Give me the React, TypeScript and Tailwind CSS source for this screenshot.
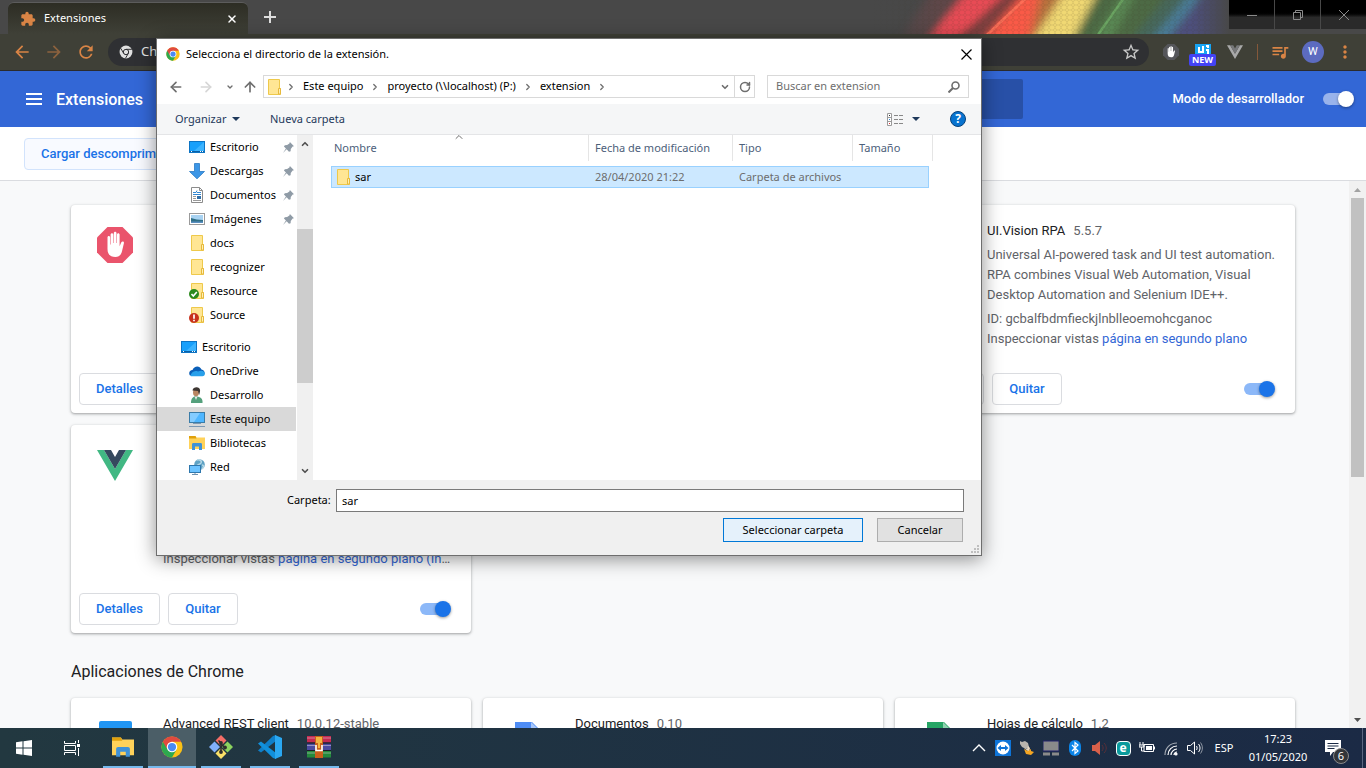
import React, { useState } from 'react';
import {
  MdArrowBack,
  MdArrowForward,
  MdExtension,
  MdMoreVert,
  MdQueueMusic,
  MdRefresh,
  MdStarBorder,
} from 'react-icons/md';
import { ArrowLeft, ArrowRight, ArrowUp, ChevronDown, ChevronRight, ChevronUp, RotateCw, X } from 'lucide-react';

/* ---------- icons ---------- */

const ChromeLogo = ({ className }: { className?: string }) => (
  <svg viewBox="0 0 48 48" className={className}>
    <circle cx="24" cy="24" r="23" fill="#fbc116" />
    <path d="M24 24 L4.1 12.5 A23 23 0 0 0 24 47 L34 29.7 Z" fill="#2da94f" />
    <path d="M4.1 12.5 A23 23 0 0 1 44 12.5 L24 12.5 L14 29.7 Z" fill="#e04a3f" />
    <circle cx="24" cy="24" r="11.5" fill="#fff" />
    <circle cx="24" cy="24" r="9" fill="#4a8af4" />
  </svg>
);

const ChromeMono = () => (
  <svg viewBox="0 0 24 24" className="size-3.5 shrink-0">
    <circle cx="12" cy="12" r="11" fill="#e0e0e0" />
    <g fill="none" stroke="#303033" strokeWidth="1.7">
      <circle cx="12" cy="12" r="4.6" />
      <path d="M12 7.4h10M8 14.3 3 5.7M16 14.3 11 23" />
    </g>
  </svg>
);

const HandIcon = ({ bg, className }: { bg: string; className?: string }) => (
  <svg viewBox="0 0 36 36" className={className}>
    <path d="M10.5 0h15L36 10.5v15L25.5 36h-15L0 25.5v-15z" fill={bg} />
    <path
      d="M10.5 10.5c0-2 2.6-2 2.6 0v7h.5V7.7c0-2 2.7-2 2.7 0V16h.5V6.2c0-2 2.7-2 2.7 0V16h.5V7.7c0-2 2.6-2 2.6 0v11.5l1.6-3.6c.8-1.9 3.2-1.3 2.7.7l-1.9 8c-.9 4-3.2 5.7-6.6 5.7-5 0-7.9-2.5-7.9-8z"
      fill="#fff"
    />
  </svg>
);

const VueIcon = ({ outer, inner, className }: { outer: string; inner: string; className?: string }) => (
  <svg viewBox="0 0 36 36" className={className}>
    <path d="M0 3h7l11 19L29 3h7L18 34z" fill={outer} />
    <path d="M7 3h7l4 7 4-7h7L18 22z" fill={inner} />
  </svg>
);

const FolderIcon = ({ badge }: { badge?: 'ok' | 'error' }) => (
  <svg viewBox="0 0 16 16" className="size-4 shrink-0">
    <path d="M2.5.5h11v9h1v6h-12z" fill="#ffe694" stroke="#eec94b" />
    <path d="M12.5 15V9.5h2V15z" fill="#fff0b5" stroke="#e6b93c" />
    {badge === 'ok' && (
      <>
        <circle cx="5" cy="11" r="5" fill="#2b8a1c" />
        <path d="M2.5 11l1.8 2 3.5-4" fill="none" stroke="#fff" strokeWidth="1.6" />
      </>
    )}
    {badge === 'error' && (
      <>
        <circle cx="5" cy="11" r="5" fill="#c8321c" />
        <path d="M5 7.5v4.3M5 12.7v1.5" stroke="#fff" strokeWidth="1.7" />
      </>
    )}
  </svg>
);

const DesktopIcon = () => (
  <svg viewBox="0 0 16 16" className="size-4 shrink-0">
    <rect x=".5" y="2.5" width="15" height="11" fill="#18a0fb" stroke="#0d74c4" />
    <path d="M15 3v9H5z" fill="#3cb4ff" />
    <path d="M1 12.5h14" stroke="#0a5fa5" />
    <path d="M2 12.5h1M11 12.5h1M13 12.5h1" stroke="#fff" />
  </svg>
);

const DownloadIcon = () => (
  <svg viewBox="0 0 16 16" className="size-4 shrink-0">
    <path d="M5.5.5h5v8h5L8 15.8.5 8.5h5z" fill="#3c96e6" stroke="#2a7ac4" strokeWidth=".8" />
  </svg>
);

const DocumentIcon = () => (
  <svg viewBox="0 0 16 16" className="size-4 shrink-0">
    <path d="M2.5.5h8l3 3v12h-11z" fill="#fff" stroke="#8c8c8c" />
    <path d="M10.5.5v3h3" fill="none" stroke="#8c8c8c" />
    <path d="M4 5.5h3l1-2M8 5.5h4M4 7.5h8" stroke="#2f86d2" fill="none" />
    <path d="M4 9.5h3M4 11.5h3M4 13.5h8" stroke="#9a9a9a" />
    <path d="M8 9h4v3H8z" fill="#2f6ea8" />
  </svg>
);

const PictureIcon = () => (
  <svg viewBox="0 0 16 16" className="size-4 shrink-0">
    <rect x=".5" y="2.5" width="15" height="11" fill="#fff" stroke="#9a9a9a" />
    <path d="M2 4h12v8H2z" fill="#a9d3f2" />
    <path d="M2 7c4 1 7 2 12 2v3H2z" fill="#2f6f86" />
    <path d="M2 10.5h12V12H2z" fill="#5a8fc0" />
  </svg>
);

const OneDriveIcon = () => (
  <svg viewBox="0 0 16 16" className="size-4 shrink-0">
    <path d="M1 12.5C-.8 10 .6 7 3.5 7 5 3 10.5 2 12.5 6.5c2.5.3 3.5 2.5 3 4.5z" fill="#0a5fb8" />
    <path d="M1.5 13C2 9.5 5 7 9 8.500c5-2 7.500 1 6.800 3-.4 1-1 1.700-2.300 1.700H3c-.6 0-1 0-1.500-.2z" fill="#28a0ea" />
  </svg>
);

const UserIcon = () => (
  <svg viewBox="0 0 16 16" className="size-4 shrink-0">
    <path d="M2 16c0-3 1-6.5 5-7l3 1c2.5.6 4 3 3.5 6z" fill="#54a07c" />
    <path d="M5.5 9.500 7 13l1.500-3.500z" fill="#e8e8e8" />
    <ellipse cx="7" cy="5.5" rx="3" ry="3.8" fill="#b98662" />
    <path d="M3.5 3.5C4-.8 12-1 11 4.5L10.2 8 9 4z" fill="#3d3632" />
  </svg>
);

const ComputerIcon = () => (
  <svg viewBox="0 0 16 16" className="size-4 shrink-0">
    <rect x=".5" y="1.5" width="15" height="10" fill="#4fb6ff" stroke="#3a7ca8" />
    <path d="M1 2h10L5 11H1z" fill="#84ccff" />
    <path d="M4 12.5h8M0 15.5h16" stroke="#7c98b3" />
  </svg>
);

const LibraryIcon = ({ className }: { className?: string }) => (
  <svg viewBox="0 0 16 16" className={className}>
    <path d="M0 1h6.5l1 1.5H16V14H0z" fill="#ffd25a" />
    <path d="M0 1h6.5l1 2.5H0z" fill="#e0a10c" />
    <path d="M3 15V9.5C3 8.5 3.5 8 4.5 8h7c1 0 1.5.5 1.5 1.500V15h-3v-3.500H6V15z" fill="#3f92d8" />
  </svg>
);

const NetworkIcon = () => (
  <svg viewBox="0 0 16 16" className="size-4 shrink-0">
    <circle cx="10.5" cy="5.5" r="5.3" fill="#5fa2c4" />
    <path d="M8 1c3-1 5 1 4 3s-4 1-4 3M13 6c2 0 2 2 0 4" fill="none" stroke="#b7d8e6" strokeWidth="1.5" />
    <rect x=".5" y="6.5" width="11" height="7" fill="#6cc3ff" stroke="#2e77ad" />
    <path d="M3 15.5h6M6 14v1" stroke="#6f93b0" />
  </svg>
);

const PinIcon = () => (
  <svg viewBox="0 0 12 12" className="size-[11px] shrink-0">
    <path d="M7.5 0 12 4.5 10.5 5 8.5 7.5 8.3 10 6.5 10.5 4 8 0 12 3.2 7.2 1 5 2 3.5l2.5-.2L7 1.500z" fill="#8f9ba6" />
  </svg>
);

const HeaderPattern = () => (
  <svg viewBox="0 0 360 34" preserveAspectRatio="none" className="h-full w-full">
    <defs>
      <filter id="glow" x="-20%" y="-20%" width="140%" height="140%">
        <feGaussianBlur stdDeviation="5 2" />
      </filter>
      <pattern id="hex" width="6" height="5" patternUnits="userSpaceOnUse">
        <path d="M0 2.5 1.5 0h3L6 2.5 4.5 5h-3z" fill="none" stroke="#302c1c" strokeOpacity=".2" strokeWidth=".6" />
      </pattern>
      <linearGradient id="fade">
        <stop offset="0" stopColor="#484848" />
        <stop offset=".2" stopColor="#484848" stopOpacity="0" />
        <stop offset=".9" stopColor="#484848" stopOpacity="0" />
        <stop offset="1" stopColor="#484848" />
      </linearGradient>
    </defs>
    <path d="M0 0h360v34H0z" fill="#484848" />
    <g filter="url(#glow)">
      <path d="M30 40 60-6h60L70 40z" fill="#5e4649" />
      <path d="M58 40 96-6h42L88 40z" fill="#e84c55" />
      <path d="M86 40 136-6h24L112 40z" fill="#80413f" />
      <path d="M114 40 154-6h26L164 46z" fill="#fa5a46" />
      <path d="M160 40 172-6h24L174 40z" fill="#b5713c" />
      <path d="M164 40 194-6h34L204 40z" fill="#f0d873" />
      <path d="M204 40 228-6h70L268 40z" fill="#4e6a44" />
      <path d="M226 40 254-6h12L242 40z" fill="#5a8a55" />
      <path d="M262 40 300-6h24L284 40z" fill="#46685c" />
      <path d="M282 40 320-6h16L300 40z" fill="#4a7c96" />
      <path d="M298 40 334-6h32v46z" fill="#4d4f7c" />
    </g>
    <path d="M117 34 153 0h4L121 34z" fill="#ff7058" opacity=".9" />
    <path d="M228 34 252 0h3L231 34z" fill="#6fae67" opacity=".8" />
    <path d="M0 0h360v34H0z" fill="url(#hex)" />
    <path d="M0 0h360v34H0z" fill="url(#fade)" />
  </svg>
);

/* ---------- browser chrome ---------- */

const TabStrip = () => (
  <div className="flex h-[34px] shrink-0 bg-[#484848] font-['Noto_Sans',sans-serif] text-[11px]">
    <div className="ml-2 mt-0.5 flex w-60 items-center rounded-t-md border-t border-[#5c5c5c] bg-linear-to-b from-[#2d2d24] to-[#3f4037] pl-3 pr-2.5 text-white">
      <MdExtension className="size-4 text-[#d98445]" />
      <span className="ml-2 flex-1">Extensiones</span>
      <button aria-label="Cerrar pestaña">
        <X className="size-3" strokeWidth={3} />
      </button>
    </div>
    <button aria-label="Nueva pestaña" className="ml-3.5 text-[#dedede]">
      <svg viewBox="0 0 16 16" className="size-4">
        <path d="M8 2v12M2 8h12" stroke="currentColor" strokeWidth="2" />
      </svg>
    </button>
    <div className="flex-1" />
    <div className="h-full w-[360px]">
      <HeaderPattern />
    </div>
    <div className="flex h-[29px] gap-px text-[#8a8a8a]">
      <button aria-label="Minimizar" className="flex w-[45px] items-center justify-center bg-linear-to-b from-black from-40% to-[#2a2a2a] to-60%">
        <svg viewBox="0 0 10 10" className="size-2.5"><path d="M0 5.5h10" stroke="currentColor" /></svg>
      </button>
      <button aria-label="Restaurar" className="flex w-[45px] items-center justify-center bg-linear-to-b from-black from-40% to-[#2a2a2a] to-60%">
        <svg viewBox="0 0 10 10" className="size-2.5" fill="none" stroke="currentColor">
          <path d="M.5 2.5h7v7h-7zM2.5 2.5v-2h7v7h-2" />
        </svg>
      </button>
      <button aria-label="Cerrar" className="flex w-[45px] items-center justify-center bg-linear-to-b from-black from-40% to-[#2a2a2a] to-60%">
        <svg viewBox="0 0 10 10" className="size-2.5"><path d="M0 0l10 10M10 0 0 10" stroke="currentColor" /></svg>
      </button>
    </div>
  </div>
);

const AddressToolbar = () => (
  <div className="flex h-[37px] shrink-0 items-center gap-3 border-b border-[#2b2b2e] bg-[#3f4037] pl-3 pr-[11px] text-[#d98445]">
    <button aria-label="Atrás"><MdArrowBack className="size-5" /></button>
    <button aria-label="Adelante" className="opacity-50"><MdArrowForward className="size-5" /></button>
    <button aria-label="Recargar"><MdRefresh className="size-5" /></button>
    <div className="flex h-7 flex-1 items-center rounded-full bg-[#2f3033] pl-[11px] pr-2 text-[#e4e4e4]">
      <ChromeMono />
      <span className="ml-2 flex-1 font-['Noto_Sans',sans-serif] text-[13px]">Chrome</span>
      <MdStarBorder className="size-5 text-[#c8c8c8]" />
    </div>
    <HandIcon bg="#55565a" className="size-5 p-0.5" />
    <div className="relative size-5">
      <svg viewBox="0 0 16 16" className="mx-auto size-4">
        <path d="M0 2h16v14H0z" fill="#16a4f4" />
        <path d="M4 5v5h4V4M11 4h2v2M11 8h2v4" stroke="#fff" strokeWidth="2" fill="none" />
      </svg>
      <span className="absolute -left-1 top-3 flex h-3 w-[27px] items-center justify-center rounded-xs bg-[#4343f5] font-['Noto_Sans',sans-serif] text-[9px] font-bold text-white">
        NEW
      </span>
    </div>
    <VueIcon outer="#a9a9a9" inner="#77787a" className="size-5 p-0.5" />
    <div className="h-4 w-px bg-[#85583a]" />
    <MdQueueMusic className="size-5" />
    <span className="flex size-[22px] items-center justify-center rounded-full bg-[#5c6bc0] font-['Roboto',sans-serif] text-[11px] text-white">W</span>
    <MdMoreVert className="-ml-px size-5" />
  </div>
);

/* ---------- extensions page ---------- */

const Toggle = ({ label, light }: { label: string; light?: boolean }) => {
  const [on, setOn] = useState(true);
  return (
    <span className="relative flex h-4 w-[31px] items-center">
      <input
        type="checkbox"
        aria-label={label}
        checked={on}
        onChange={e => setOn(e.target.checked)}
        className={`h-3 w-7 appearance-none rounded-full ${light ? 'bg-[#99b3eb]' : 'bg-[#8cb8f8]'}`}
      />
      <span
        className={`pointer-events-none absolute top-0 size-4 rounded-full shadow-[0_1px_3px_rgba(0,0,0,0.4)] ${
          on ? 'right-0' : 'left-0'
        } ${light ? 'bg-white' : 'bg-[#1a73e8]'}`}
      />
    </span>
  );
};

type Extension = {
  name?: string;
  version?: string;
  description?: string;
  id?: string;
  inspect?: string;
  icon?: React.ReactNode;
};

const extensions: Extension[] = [
  { icon: <HandIcon bg="#ea546c" className="size-9" /> },
  {},
  {
    name: 'UI.Vision RPA',
    version: '5.5.7',
    description:
      'Universal AI-powered task and UI test automation. RPA combines Visual Web Automation, Visual Desktop Automation and Selenium IDE++.',
    id: 'gcbalfbdmfieckjlnblleoemohcganoc',
    inspect: 'página en segundo plano',
  },
  {
    icon: <VueIcon outer="#41b883" inner="#35495e" className="size-9" />,
    inspect: 'página en segundo plano (Inactivo)',
  },
];

const apps: Extension[] = [
  {
    name: 'Advanced REST client',
    version: '10.0.12-stable',
    icon: (
      <svg viewBox="0 0 36 36" className="size-9"><rect x="2" y="1" width="33" height="34" rx="2" fill="#2196f3" /></svg>
    ),
  },
  {
    name: 'Documentos',
    version: '0.10',
    icon: (
      <svg viewBox="0 0 36 36" className="size-9">
        <path d="M6 2h17l7 7v27H6z" fill="#4f8df5" />
        <path d="M22 2l8 8h-8z" fill="#a6c6fb" />
      </svg>
    ),
  },
  {
    name: 'Hojas de cálculo',
    version: '1.2',
    icon: (
      <svg viewBox="0 0 36 36" className="size-9">
        <path d="M6 2h17l7 7v27H6z" fill="#26a565" />
        <path d="M22 2l8 8h-8z" fill="#8fd2b0" />
      </svg>
    ),
  },
];

const ExtensionCard = ({ item }: { item: Extension }) => (
  <article className="flex h-52 flex-col rounded-sm bg-white shadow-[0_1px_2px_rgba(60,64,67,0.3),0_1px_3px_1px_rgba(60,64,67,0.15)]">
    <div className="flex flex-1 pl-[26px]">
      <div className="w-[66px] shrink-0 pt-[22px]">{item.icon}</div>
      <div className="min-w-0 flex-1 pt-4 leading-5 text-[#5f6368]">
        <h3 className="h-5">
          <span className="text-[#202124]">{item.name}</span>
          <span className="ml-2">{item.version}</span>
        </h3>
        <p className="mt-1 h-[60px] pr-3">{item.description}</p>
        <p className="mt-1 h-5">{item.id && `ID: ${item.id}`}</p>
        {item.inspect && (
          <p className="mr-5 truncate">
            Inspeccionar vistas <a href="#inspect" className="text-[#3367d6]">{item.inspect}</a>
          </p>
        )}
      </div>
    </div>
    <div className="flex items-center gap-2 pb-2 pl-2 pr-5 font-medium text-[#1a73e8]">
      <button className="h-8 w-[81px] rounded-sm border border-[#dadce0]">Detalles</button>
      <button className="h-8 w-[70px] rounded-sm border border-[#dadce0]">Quitar</button>
      <div className="flex-1" />
      <Toggle label={item.name ?? 'Activar'} />
    </div>
  </article>
);

const ExtensionsPage = () => (
  <div className="flex min-h-0 flex-1 flex-col bg-[#f8f9fa] font-['Roboto',sans-serif] text-[13px]">
    <header className="grid h-14 shrink-0 grid-cols-[1fr_680px_1fr] items-center bg-[#3367d6] font-medium text-white">
      <div className="flex items-center pl-[26px]">
        <button aria-label="Menú principal" className="flex w-4 flex-col gap-[3px]">
          <span className="h-0.5 bg-white" />
          <span className="h-0.5 bg-white" />
          <span className="h-0.5 bg-white" />
        </button>
        <h1 className="ml-3.5 pt-0.5 text-base">Extensiones</h1>
      </div>
      <input aria-label="Buscar extensiones" className="h-10 rounded-xs bg-[#2850a7] px-4" />
      <div className="flex items-center justify-end gap-[19px] pr-3">
        <span>Modo de desarrollador</span>
        <Toggle label="Modo de desarrollador" light />
      </div>
    </header>
    <div className="flex h-[54px] shrink-0 items-center border-b border-[#dadce0] bg-white pl-6">
      <button className="h-8 rounded-sm border border-[#d2e3fc] bg-[#f8faff] px-4 font-medium text-[#1a73e8]">
        Cargar descomprimida
      </button>
    </div>
    <div className="flex min-h-0 flex-1">
      <main className="flex-1 overflow-hidden pl-[17px] pt-6">
        <div className="mx-auto w-[1224px]">
          <div className="grid grid-cols-3 gap-3">
            {extensions.map((item, i) => (
              <ExtensionCard key={i} item={item} />
            ))}
          </div>
          <h2 className="flex h-[65px] items-center pt-3 text-base text-[#202124]">Aplicaciones de Chrome</h2>
          <div className="grid grid-cols-3 gap-3">
            {apps.map(item => (
              <ExtensionCard key={item.name} item={item} />
            ))}
          </div>
        </div>
      </main>
      <div className="flex w-[17px] flex-col items-center bg-[#f1f1f1]">
        <svg viewBox="0 0 17 17" className="size-[17px]"><path d="M5 11h7L8.5 7z" fill="#a3a3a3" /></svg>
        <div className="h-[279px] w-[13px] bg-[#c1c1c1]" />
        <div className="flex-1" />
        <svg viewBox="0 0 17 17" className="size-[17px]"><path d="M5 7h7l-3.500 4z" fill="#505050" /></svg>
      </div>
    </div>
  </div>
);

/* ---------- folder dialog ---------- */

const quickAccess = [
  { label: 'Escritorio', icon: <DesktopIcon />, pinned: true },
  { label: 'Descargas', icon: <DownloadIcon />, pinned: true },
  { label: 'Documentos', icon: <DocumentIcon />, pinned: true },
  { label: 'Imágenes', icon: <PictureIcon />, pinned: true },
  { label: 'docs', icon: <FolderIcon /> },
  { label: 'recognizer', icon: <FolderIcon /> },
  { label: 'Resource', icon: <FolderIcon badge="ok" /> },
  { label: 'Source', icon: <FolderIcon badge="error" /> },
];

const places = [
  { label: 'OneDrive', icon: <OneDriveIcon /> },
  { label: 'Desarrollo', icon: <UserIcon /> },
  { label: 'Este equipo', icon: <ComputerIcon />, selected: true },
  { label: 'Bibliotecas', icon: <LibraryIcon className="size-4 shrink-0" /> },
  { label: 'Red', icon: <NetworkIcon /> },
];

const Crumb = ({ children }: { children: React.ReactNode }) => (
  <>
    <ChevronRight className="mx-[3px] size-2.5" strokeWidth={3} />
    <button className="px-1 text-black">{children}</button>
  </>
);

const FolderDialog = () => {
  const [folder, setFolder] = useState('sar');

  return (
    <div
      role="dialog"
      aria-label="Selecciona el directorio de la extensión."
      className="absolute left-[156px] top-[38px] w-[826px] border border-[#6e6e6e] bg-white font-['Noto_Sans',sans-serif] text-[11px] text-black shadow-[0_3px_18px_rgba(0,0,0,0.45)]"
    >
      <div className="flex h-[30px] items-center pl-[9px] pr-[9px]">
        <ChromeLogo className="size-3.5" />
        <span className="ml-1.5 flex-1">Selecciona el directorio de la extensión.</span>
        <button aria-label="Cerrar">
          <svg viewBox="0 0 11 11" className="size-[11px]"><path d="M.5.5l10 10M10.5.5l-10 10" stroke="#000" strokeWidth="1.2" /></svg>
        </button>
      </div>

      <div className="flex h-[35px] items-center pl-[11px] pr-3 text-[#6e6e6e]">
        <button aria-label="Atrás"><ArrowLeft className="size-4" strokeWidth={2.5} /></button>
        <button aria-label="Adelante" className="ml-3.5 text-[#d6d6d6]"><ArrowRight className="size-4" strokeWidth={2.5} /></button>
        <button aria-label="Ubicaciones recientes" className="ml-3"><ChevronDown className="size-2" strokeWidth={4} /></button>
        <button aria-label="Subir" className="ml-2"><ArrowUp className="size-4" strokeWidth={2.5} /></button>
        <div className="ml-[5px] flex h-[23px] flex-1 items-center border border-[#d9d9d9] pl-0.5">
          <FolderIcon />
          <span className="w-px" />
          <Crumb>Este equipo</Crumb>
          <Crumb>proyecto (\\localhost) (P:)</Crumb>
          <Crumb>extension</Crumb>
          <ChevronRight className="mx-[3px] size-2.5" strokeWidth={3} />
          <span className="flex-1" />
          <button aria-label="Ubicaciones anteriores" className="px-1"><ChevronDown className="size-2.5" strokeWidth={4} /></button>
          <button aria-label="Actualizar" className="flex h-full w-5 items-center justify-center border-l border-[#d9d9d9]">
            <RotateCw className="size-3" strokeWidth={3} />
          </button>
        </div>
        <label className="ml-3 flex h-[23px] w-[202px] items-center border border-[#d9d9d9] pl-2 pr-2">
          <input aria-label="Buscar en extension" placeholder="Buscar en extension" className="min-w-0 flex-1 outline-none placeholder:text-[#6e6e6e]" />
          <svg viewBox="0 0 12 12" className="size-3" fill="none" stroke="#6e6e6e">
            <circle cx="7.5" cy="4.5" r="3.5" strokeWidth="1.6" />
            <path d="M5 7 .5 11.5" strokeWidth="2" />
          </svg>
        </label>
      </div>

      <div className="flex h-[31px] items-center border-b border-[#e4e5e7] bg-[#f5f6f7] pl-[18px] pr-[15px] text-[#1e395b]">
        <button className="flex w-[95px] items-center gap-1.5">
          Organizar
          <svg viewBox="0 0 8 4" className="h-1 w-2"><path d="M0 0h8L4 4z" fill="#1e395b" /></svg>
        </button>
        <button>Nueva carpeta</button>
        <span className="flex-1" />
        <button aria-label="Vista" className="flex items-center gap-2">
          <svg viewBox="0 0 17 13" className="h-[13px] w-[17px]">
            <path d="M.5.5h4v12h-4zM.5 4.5h4M.5 8.5h4" fill="#fff" stroke="#9a9a9a" />
            <path d="M2 2.5h1" stroke="#333" />
            <path d="M2 6.5h1" stroke="#2f86d2" />
            <path d="M2 10.5h1" stroke="#d33" />
            <path d="M7 2.5h4M12 2.5h4M7 6.5h4M12 6.5h4M7 10.5h4M12 10.5h4" stroke="#888" />
          </svg>
          <svg viewBox="0 0 8 4" className="h-1 w-2"><path d="M0 0h8L4 4z" fill="#1e395b" /></svg>
        </button>
        <button aria-label="Ayuda" className="ml-[30px] flex size-4 items-center justify-center rounded-full border border-[#06427c] bg-[#0873cf] text-xs font-bold text-white">?</button>
      </div>

      <div className="flex h-[345px]">
        <nav className="w-[139px]">
          {quickAccess.map(item => (
            <a key={item.label} href="#folder" className="flex h-6 items-center pl-8">
              {item.icon}
              <span className="ml-[5px] w-[73px] whitespace-nowrap">{item.label}</span>
              {item.pinned && <PinIcon />}
            </a>
          ))}
          <a href="#folder" className="mt-2 flex h-6 items-center pl-6">
            <DesktopIcon />
            <span className="ml-[5px]">Escritorio</span>
          </a>
          {places.map(item => (
            <a key={item.label} href="#folder" className={`flex h-6 items-center pl-8 ${item.selected ? 'bg-[#d9d9d9]' : ''}`}>
              {item.icon}
              <span className="ml-[5px]">{item.label}</span>
            </a>
          ))}
        </nav>
        <div className="ml-px flex w-4 flex-col items-center bg-[#f0f0f0] text-[#505050]">
          <ChevronUp className="my-1 size-2.5" strokeWidth={4} />
          <div className="mt-[76px] h-[154px] w-full bg-[#cdcdcd]" />
          <div className="flex-1" />
          <ChevronDown className="my-1 size-2.5" strokeWidth={4} />
        </div>
        <div className="relative ml-0.5 flex-1 pl-4">
          <ChevronUp className="absolute -top-1 left-[138px] size-3 text-[#6e6e6e]" />
          <table className="w-[602px] table-fixed border-separate border-spacing-0 text-left">
            <colgroup>
              <col className="w-[258px]" />
              <col className="w-36" />
              <col className="w-[120px]" />
              <col className="w-[76px]" />
              <col className="w-1" />
            </colgroup>
            <thead className="text-[#4c607a]">
              <tr className="h-[26px]">
                <th className="border-r border-[#e5e5e5] pl-[3px] font-normal">Nombre</th>
                <th className="border-r border-[#e5e5e5] pl-1.5 font-normal">Fecha de modificación</th>
                <th className="border-r border-[#e5e5e5] pl-1.5 font-normal">Tipo</th>
                <th colSpan={2} className="border-r border-[#e5e5e5] pl-1.5 font-normal">Tamaño</th>
              </tr>
            </thead>
            <tbody className="text-[#6d6d6d] before:block before:h-[5px]">
              <tr className="h-[22px] bg-[#cce8ff]">
                <td className="border-y border-l border-[#99d1ff] pl-[3px] text-black">
                  <span className="flex items-center gap-1"><FolderIcon />sar</span>
                </td>
                <td className="border-y border-[#99d1ff] pl-1.5">28/04/2020 21:22</td>
                <td className="border-y border-[#99d1ff] pl-1.5">Carpeta de archivos</td>
                <td className="border-y border-r border-[#99d1ff]" />
                <td className="bg-white" />
              </tr>
            </tbody>
          </table>
        </div>
      </div>

      <div className="relative h-[75px] bg-[#f0f0f0] pl-[130px] pr-[17px] pt-[9px]">
        <div className="flex items-center">
          <label htmlFor="folder-name" className="w-[49px] whitespace-nowrap">Carpeta:</label>
          <input
            id="folder-name"
            value={folder}
            onChange={e => setFolder(e.target.value)}
            className="h-[23px] flex-1 border border-[#7a7a7a] bg-white px-[5px] outline-none"
          />
        </div>
        <div className="mt-1.5 flex justify-end gap-3.5 pr-px">
          <button className="h-6 w-[140px] border border-[#0078d7] bg-[#e5f1fb]">Seleccionar carpeta</button>
          <button className="h-6 w-[86px] border border-[#adadad] bg-[#e1e1e1]">Cancelar</button>
        </div>
        <svg viewBox="0 0 8 8" className="absolute bottom-0.5 right-0.5 size-2">
          <path d="M6 0h2v2H6zM3 3h2v2H3zM6 3h2v2H6zM0 6h2v2H0zM3 6h2v2H3zM6 6h2v2H6z" fill="#bfbfbf" />
        </svg>
      </div>
    </div>
  );
};

/* ---------- taskbar ---------- */

const GitIcon = () => (
  <svg viewBox="0 0 24 24" className="size-6">
    <path d="M12 0l5.5 5.5L12 11 6.500 5.500z" fill="#f46d67" />
    <path d="M18.5 6.500 24 12l-5.500 5.500L13 12z" fill="#8cd35f" />
    <path d="M5.5 6.500 11 12l-5.500 5.500L0 12z" fill="#80b0fb" />
    <path d="M12 13l5.500 5.500L12 24l-5.500-5.500z" fill="#fbe168" />
    <path d="M9.5 5.500 12 8v9M12 9l4 3.500" stroke="#2d2d2d" strokeWidth="1.6" fill="none" />
    <circle cx="12" cy="8" r="1.9" fill="#2d2d2d" />
    <circle cx="16" cy="12.5" r="1.9" fill="#2d2d2d" />
    <circle cx="12" cy="17" r="1.9" fill="#2d2d2d" />
  </svg>
);

const CodeIcon = () => (
  <svg viewBox="0 0 24 24" className="size-6">
    <path d="M18 0v6L3 17.5 0 15.5 15 1z" fill="#0f7fc9" />
    <path d="M18 24v-6L3 6.5 0 8.5 15 23z" fill="#1190dc" />
    <path d="M17 0l7 3v18l-7 3z" fill="#2aa8f2" />
  </svg>
);

const RarIcon = () => (
  <svg viewBox="0 0 24 24" className="size-6">
    <path d="M0 1h24v6.5H0z" fill="#c42a50" />
    <path d="M0 8.5h24V15H0z" fill="#4a4aa0" />
    <path d="M0 16h24v6.5H0z" fill="#238a3c" />
    <path d="M0 3h24M0 10.5h24M0 18h24" stroke="#e6d9e2" strokeOpacity=".5" />
    <path d="M0 7.5h24v1H0zM0 15h24v1H0z" fill="#1a1a28" />
    <path d="M8 1h8v22H8z" fill="#c8601c" />
    <path d="M9 2h6v6H9z" fill="#f2b440" />
    <path d="M9 10v5.5h6V10" fill="none" stroke="#fff" strokeWidth="1.6" />
    <path d="M11 7h2v6h-2z" fill="#f2b440" />
  </svg>
);

const TaskbarApp = ({ label, wide, children }: { label: string; wide?: boolean; children: React.ReactNode }) => (
  <button
    aria-label={label}
    className={`flex h-10 flex-col items-center ${wide ? 'w-12 bg-[#4b5e67]' : 'w-10'}`}
  >
    <span className="flex flex-1 items-center">{children}</span>
    <span className="h-0.5 w-full bg-[#76b9ed]" />
  </button>
);

const tray = [
  <svg key="up" viewBox="0 0 16 16" className="size-4"><path d="M2 11l6-6 6 6" fill="none" stroke="#fff" strokeWidth="1.4" /></svg>,
  <svg key="tv" viewBox="0 0 16 16" className="size-4">
    <path d="M0 0h16v16H0z" fill="#0e74d8" />
    <circle cx="8" cy="8" r="6.5" fill="#fff" />
    <path d="M2.5 8 6 5v2h4V5l3.5 3L10 11V9H6v2z" fill="#0e74d8" />
  </svg>,
  <svg key="cat" viewBox="0 0 16 16" className="size-4">
    <path d="M1 1l2 1 3-1 3 2 1 4-3 2-4-2-2-3z" fill="#b9b4ae" />
    <path d="M5 8l3 1 1-3 2 2-1 4z" fill="#ead9c2" />
    <path d="M5 9l4 2 3-2v2l3 1-3 3-5-1z" fill="#f5a623" />
  </svg>,
  <svg key="pad" viewBox="0 0 16 16" className="size-4">
    <path d="M0 1h16v10H0z" fill="#8a8a8a" stroke="#23236a" />
    <path d="M0 12.5h7v3H0zM9 12.5h7v3H9z" fill="#8a8a8a" />
  </svg>,
  <svg key="bt" viewBox="0 0 16 16" className="size-4">
    <rect x="2" width="12" height="16" rx="6" fill="#0a84e8" />
    <path d="M5 5l6 6-3 2.5v-11L11 5l-6 6" fill="none" stroke="#fff" strokeWidth="1.2" />
  </svg>,
  <svg key="spk" viewBox="0 0 16 16" className="size-4">
    <path d="M1 5h3l5-4v14l-5-4H1z" fill="#d9604a" />
    <path d="M11 5c1.5 2 1.5 4 0 6M13 3c3 3 3 7 0 10" fill="none" stroke="#5a3038" />
  </svg>,
  <span key="eset" className="flex size-[15px] items-center justify-center rounded-sm border border-white bg-[#0a9a9c] text-xs font-bold leading-3 text-white">e</span>,
  <svg key="bat" viewBox="0 0 16 16" className="size-4">
    <path d="M5 4.5h9.5v7H5zM15.5 6.5v3" fill="none" stroke="#fff" />
    <path d="M7 6h6v4H7z" fill="#fff" />
    <path d="M1 2v3M4 2v3M0 5h5v2H0zM2.5 7v4H5" fill="none" stroke="#fff" />
  </svg>,
  <svg key="wifi" viewBox="0 0 16 16" className="size-4" fill="none" stroke="#fff" strokeWidth="1.2">
    <path d="M2 15C2 8 7 3 14 3" opacity=".6" />
    <path d="M5 15c0-5 4-9 9-9M8 15c0-3 3-6 6-6M11 15c0-1.5 1.5-3 3-3" />
    <circle cx="13" cy="14" r="1" fill="#fff" />
  </svg>,
  <svg key="vol" viewBox="0 0 16 16" className="size-4" fill="none" stroke="#fff">
    <path d="M.5 5.5h3l4-3.5v12l-4-3.500h-3z" />
    <path d="M9.5 6c.8 1.3.8 2.7 0 4M11.5 4c2 2.5 2 5.5 0 8" />
    <path d="M13.5 2.500c2.500 3.500 2.500 7.500 0 11" opacity=".5" />
  </svg>,
];

const Taskbar = () => (
  <footer className="flex h-10 shrink-0 items-center bg-linear-to-r from-[#223840] to-[#1b2a45] font-['Noto_Sans',sans-serif] text-[11px] text-white">
    <button aria-label="Inicio" className="flex w-12 justify-center">
      <svg viewBox="0 0 16 16" className="size-4">
        <path d="M0 2.2 6.5 1.3v6.200H0zM7.500 1.200 16 0v7.500H7.500zM0 8.500h6.500v6.200L0 13.800zM7.500 8.500H16V16l-8.500-1.200z" fill="#fff" />
      </svg>
    </button>
    <button aria-label="Vista de tareas" className="flex w-12 justify-center">
      <svg viewBox="0 0 17 16" className="h-4 w-[17px]" fill="none" stroke="#fff">
        <path d="M.5 1v2.5h11V1M.5 15v-2.5h11V15M.5 5.5h11v5H.5zM14.5 0v3M14.5 8v8" />
        <path d="M14.5 4v3" strokeWidth="3" />
      </svg>
    </button>
    <div className="ml-[7px] flex gap-[9px]">
      <div className="-mr-1"><TaskbarApp label="Explorador de archivos"><LibraryIcon className="size-[22px]" /></TaskbarApp></div>
      <div className="-mr-1"><TaskbarApp label="Google Chrome" wide><ChromeLogo className="size-[22px]" /></TaskbarApp></div>
      <TaskbarApp label="Git"><GitIcon /></TaskbarApp>
      <TaskbarApp label="Visual Studio Code"><CodeIcon /></TaskbarApp>
      <TaskbarApp label="WinRAR"><RarIcon /></TaskbarApp>
    </div>
    <div className="flex-1" />
    <div className="flex items-center">
      {tray.map((icon, i) => (
        <span key={i} className="flex w-6 justify-center">{icon}</span>
      ))}
    </div>
    <button className="w-[34px] text-center">ESP</button>
    <button className="w-[74px] text-center leading-[18px]">
      17:23
      <br />
      01/05/2020
    </button>
    <div className="relative ml-2.5 mr-[11px] w-[26px]">
      <svg viewBox="0 0 16 16" className="size-4">
        <path d="M0 0h16v12H8l-3 4v-4H0z" fill="#fff" />
        <path d="M2.5 3.5h11M2.5 6h11M2.5 8.5h7" stroke="#1b2a45" />
      </svg>
      <span className="absolute left-2 top-2 flex size-4 items-center justify-center rounded-full border border-[#8b8b8b] bg-[#33363a]">6</span>
    </div>
    <div className="mr-[3px] h-full w-px bg-[#5a6680]" />
  </footer>
);

const App = () => {
  return (
    <div className="relative flex h-screen flex-col overflow-hidden">
      <TabStrip />
      <AddressToolbar />
      <ExtensionsPage />
      <Taskbar />
      <FolderDialog />
    </div>
  );
};

export default App;
